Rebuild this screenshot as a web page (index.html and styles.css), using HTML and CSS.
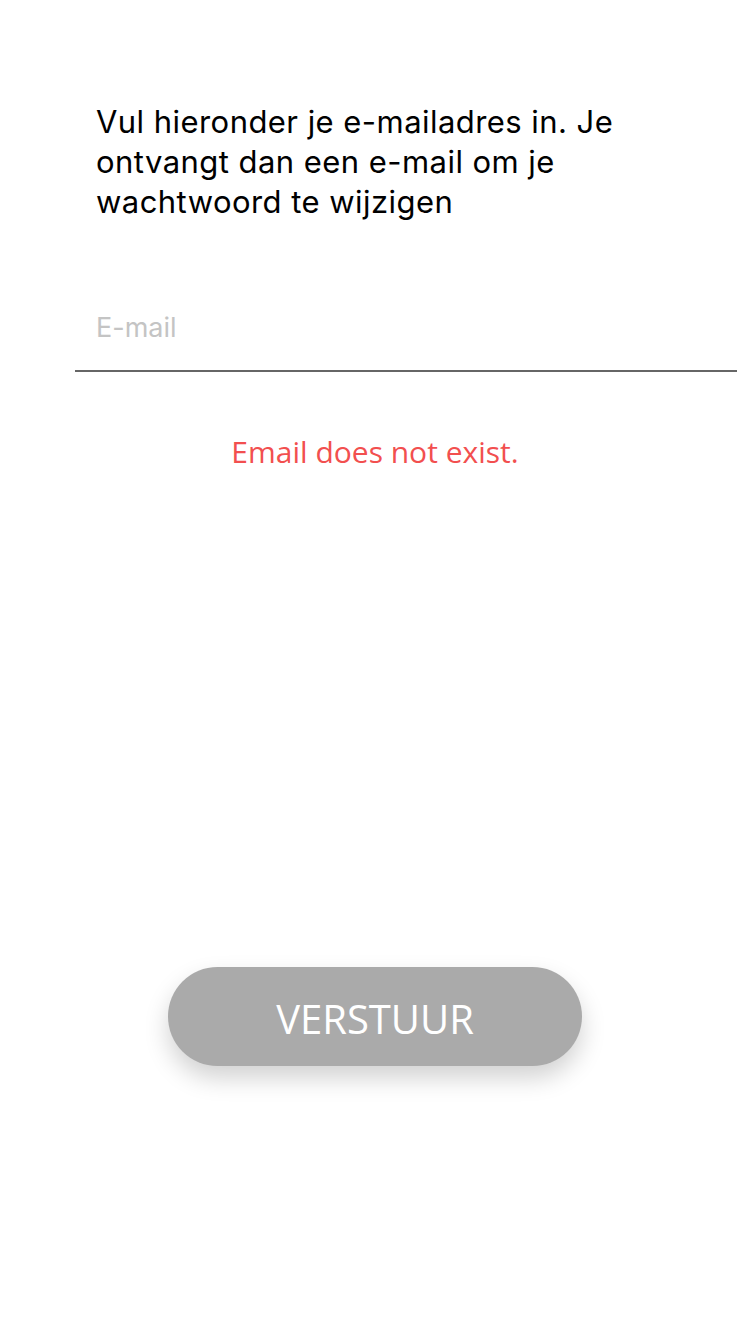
FILE: index.html
```html
<!DOCTYPE html>
<html>
<head>
<meta charset="utf-8">
<link rel="stylesheet" href="styles.css">
</head>
<body>
<main class="page">
  <p class="intro">Vul hieronder je e-mailadres in. Je ontvangt dan een e-mail om je wachtwoord te wijzigen</p>
  <div class="field">
    <input class="field-input" type="email" placeholder="E-mail">
  </div>
  <p class="error">Email does not exist.</p>
  <div class="actions">
    <button class="submit">VERSTUUR</button>
  </div>
</main>
</body>
</html>
```
FILE: styles.css
```css
html, body {
  margin: 0;
  padding: 0;
  background: #fff;
}
.page {
  width: 750px;
  height: 1334px;
  display: flex;
  flex-direction: column;
}
.intro {
  margin: 102px 0 0 0;
  padding: 0 100px 0 96px;
  font-family: Inter, "Liberation Sans", sans-serif;
  font-size: 31px;
  letter-spacing: 0.45px;
  line-height: 40px;
  color: #000;
}
.field {
  margin: 80px 13px 0 75px;
  border-bottom: 2px solid #666;
  height: 68px;
  display: flex;
  align-items: center;
}
.field-input {
  border: none;
  outline: none;
  background: transparent;
  padding: 0 0 0 21px;
  width: 100%;
  font-family: Inter, "Liberation Sans", sans-serif;
  font-size: 27px;
  color: #000;
  height: 40px;
  margin-top: -18px;
}
.field-input::placeholder {
  color: #c4c4c4;
}
.error {
  margin: 60px 0 0 0;
  text-align: center;
  font-family: "Open Sans", sans-serif;
  font-size: 30px;
  line-height: 40px;
  color: #f24f4f;
}
.actions {
  display: flex;
  justify-content: center;
  margin-top: 495px;
}
.submit {
  width: 414px;
  height: 99px;
  border: none;
  border-radius: 50px;
  background: #aaaaaa;
  color: #fff;
  font-family: "Open Sans", sans-serif;
  font-size: 40px;
  box-shadow: 0 12px 24px rgba(0, 0, 0, 0.18);
  padding: 4px 0 0 0;
}
```
